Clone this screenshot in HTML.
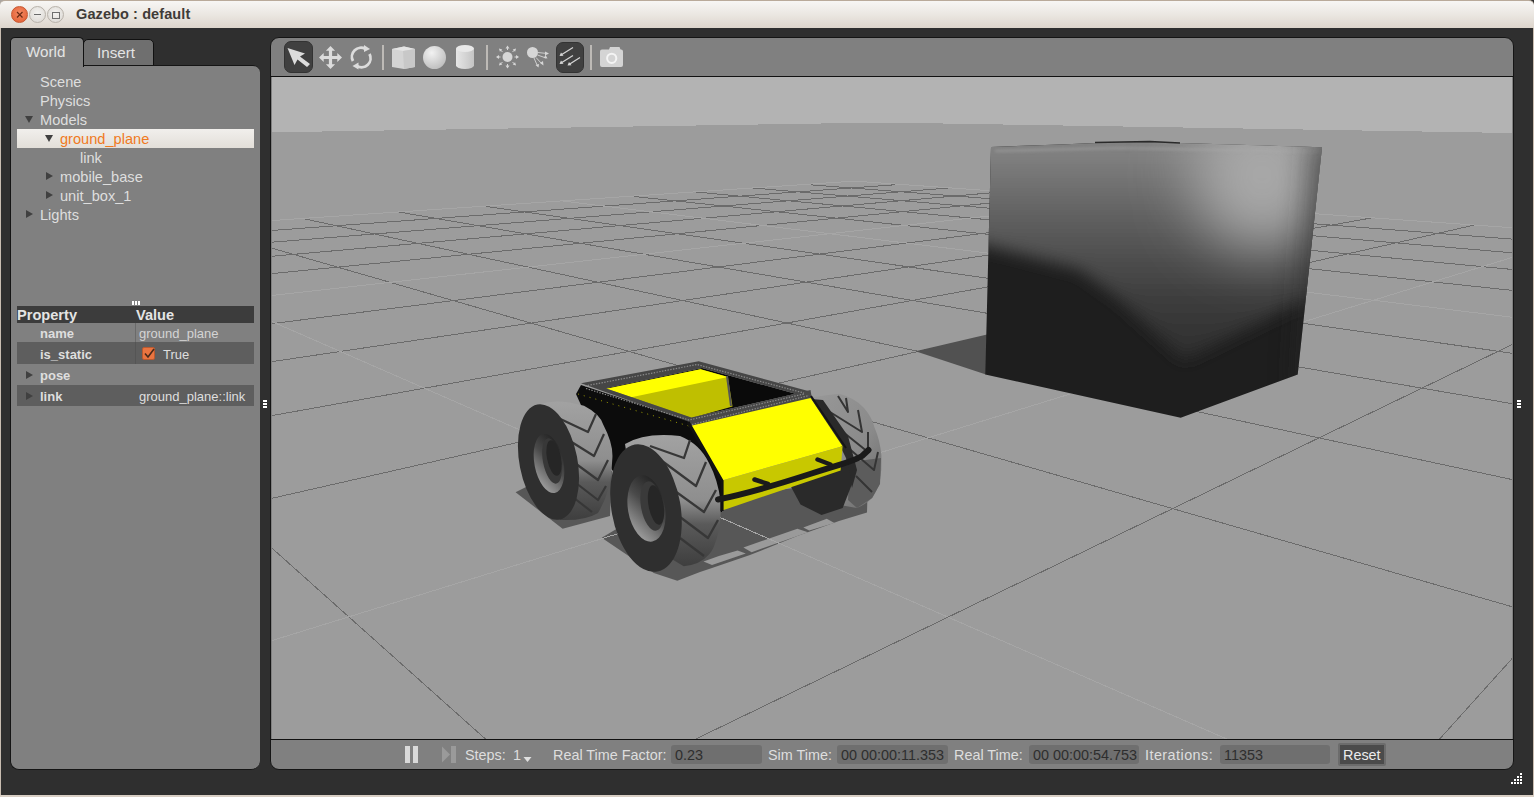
<!DOCTYPE html>
<html><head><meta charset="utf-8">
<style>
*{margin:0;padding:0;box-sizing:border-box}
html,body{width:1534px;height:797px;overflow:hidden;background:#2f2f2f;font-family:"Liberation Sans",sans-serif}
.a{position:absolute}
#title{left:0;top:0;width:1534px;height:28px;background:linear-gradient(#f7f6f4,#ebe7e2 50%,#ddd5cc);border-top:1px solid #b9aa9a;border-radius:5px 5px 0 0}
#title .t{left:76px;top:5px;font-size:14.5px;font-weight:bold;color:#3f3b37;letter-spacing:0.1px}
.wb{width:17px;height:17px;border-radius:50%;top:5px}
#lbord{left:0;top:28px;width:1px;height:769px;background:#c9bdb1}
#rbord{left:1533px;top:28px;width:1px;height:769px;background:#c9bdb1}
#bbord{left:0;top:795px;width:1534px;height:2px;background:#d8cec4}
.tab{border:1px solid #111;border-bottom:none;border-radius:5px 5px 0 0;color:#e6e6e6;font-size:14px}
#lpanel{left:10px;top:65px;width:250px;height:705px;background:#808080;border:1px solid #151515;border-right:none;border-radius:0 7px 9px 9px}
.tr{left:0;font-size:14.6px;color:#dedede;white-space:nowrap;margin-top:0.5px}
.tri{width:0;height:0;border-left:4px solid transparent;border-right:4px solid transparent;border-top:7px solid #404040}
.trr{width:0;height:0;border-top:4px solid transparent;border-bottom:4px solid transparent;border-left:7px solid #404040}
.pt{font-size:13px;white-space:nowrap}
#vpanel{left:270px;top:37px;width:1244px;height:733px;background:#808080;border:1px solid #151515;border-radius:9px}
.sep{width:2px;height:25px;background:#bdbab6;top:45px}
.bt{font-size:14.4px;color:#dedede;white-space:nowrap;top:747px}
.fld{top:745px;height:19px;background:#6f6f6f;border-radius:3px;font-size:14.4px;color:#2e2e2e;padding-left:4px;line-height:21px;white-space:nowrap}
</style></head><body>
<div class="a" style="left:0;top:0;width:6px;height:6px;background:#aaa5a0"></div>
<div id="title" class="a">
  <div class="a wb" style="left:11px;background:radial-gradient(circle at 50% 40%,#f48a64,#e05a2e);border:1px solid #c75730"></div>
  <svg class="a" style="left:16px;top:10px" width="8" height="8"><path d="M1 1L6.5 6.5M6.5 1L1 6.5" stroke="#6a2a14" stroke-width="1.2"/></svg>
  <div class="a wb" style="left:29px;background:radial-gradient(circle at 50% 40%,#f4f3f1,#d9d5d0);border:1px solid #b8b2aa"></div>
  <div class="a" style="left:34px;top:12.8px;width:7px;height:1.5px;background:#6a6a6a"></div>
  <div class="a wb" style="left:47px;background:radial-gradient(circle at 50% 40%,#f4f3f1,#d9d5d0);border:1px solid #b8b2aa"></div>
  <div class="a" style="left:52px;top:10.5px;width:7.5px;height:7px;border:1.3px solid #6e6e6e"></div>
  <div class="a t">Gazebo : default</div>
</div>
<div id="lbord" class="a"></div><div id="rbord" class="a"></div><div id="bbord" class="a"></div>

<!-- left panel -->
<div class="a tab" style="left:83px;top:39px;width:71px;height:27px;background:#6f6f6f;border-bottom:1px solid #111"></div>
<div id="lpanel" class="a"></div>
<div class="a tab" style="left:10px;top:37px;width:74px;height:30px;background:#808080"></div>
<div class="a" style="left:26px;top:42.5px;font-size:15.2px;color:#e4e4e4">World</div>
<div class="a" style="left:97px;top:43.5px;font-size:15.2px;color:#e4e4e4">Insert</div>

<div class="a tr" style="left:40px;top:73px">Scene</div>
<div class="a tr" style="left:40px;top:92px">Physics</div>
<div class="a tri" style="left:25px;top:116px"></div>
<div class="a tr" style="left:40px;top:111px">Models</div>
<div class="a" style="left:17px;top:129px;width:237px;height:19px;background:linear-gradient(#f1efec,#e3dfd9)"></div>
<div class="a tri" style="left:45px;top:135px"></div>
<div class="a tr" style="left:60px;top:130px;color:#f07a1e">ground_plane</div>
<div class="a tr" style="left:80px;top:149px">link</div>
<div class="a trr" style="left:46px;top:172px"></div>
<div class="a tr" style="left:60px;top:168px">mobile_base</div>
<div class="a trr" style="left:46px;top:191px"></div>
<div class="a tr" style="left:60px;top:187px">unit_box_1</div>
<div class="a trr" style="left:26px;top:210px"></div>
<div class="a tr" style="left:40px;top:206px">Lights</div>

<!-- splitter handle -->
<div class="a" style="left:132px;top:301px;width:2px;height:4px;background:#fff"></div>
<div class="a" style="left:135px;top:301px;width:2px;height:4px;background:#fff"></div>
<div class="a" style="left:138px;top:301px;width:2px;height:4px;background:#fff"></div>

<!-- property table -->
<div class="a" style="left:17px;top:306px;width:237px;height:17px;background:#3c3c3c"></div>
<div class="a pt" style="left:17px;top:307px;font-weight:bold;color:#e4e4e4;font-size:14.6px">Property</div>
<div class="a pt" style="left:136px;top:307px;font-weight:bold;color:#e4e4e4;font-size:14.6px">Value</div>
<div class="a" style="left:135px;top:323px;width:1px;height:41px;background:#6a6a6a"></div>
<div class="a pt" style="left:40px;top:326px;font-weight:bold;color:#dedede">name</div>
<div class="a pt" style="left:139px;top:326px;color:#d4d4d4">ground_plane</div>
<div class="a" style="left:17px;top:342px;width:237px;height:22px;background:#5e5e5e"></div>
<div class="a" style="left:135px;top:342px;width:1px;height:22px;background:#555"></div>
<div class="a pt" style="left:40px;top:347px;font-weight:bold;color:#dedede">is_static</div>
<div class="a" style="left:142px;top:347px;width:13px;height:13px;background:#ea7440;border-radius:2px;border:1px solid #b95a30"></div>
<svg class="a" style="left:142px;top:347px" width="14" height="14"><path d="M3 6.5L6 10L12 2" stroke="#4a2a1a" stroke-width="1.6" fill="none"/></svg>
<div class="a pt" style="left:163px;top:347px;color:#dedede">True</div>
<div class="a trr" style="left:26px;top:371px"></div>
<div class="a pt" style="left:40px;top:368px;font-weight:bold;color:#dedede">pose</div>
<div class="a" style="left:17px;top:385px;width:237px;height:21px;background:#5e5e5e"></div>
<div class="a trr" style="left:26px;top:392px"></div>
<div class="a pt" style="left:40px;top:389px;font-weight:bold;color:#dedede">link</div>
<div class="a pt" style="left:139px;top:389px;color:#dedede">ground_plane::link</div>
<!-- right splitter handles -->
<div class="a" style="left:263px;top:400px;width:4px;height:2px;background:#fff"></div>
<div class="a" style="left:263px;top:403px;width:4px;height:2px;background:#fff"></div>
<div class="a" style="left:263px;top:406px;width:4px;height:2px;background:#fff"></div>
<div class="a" style="left:1517px;top:400px;width:4px;height:2px;background:#fff"></div>
<div class="a" style="left:1517px;top:403px;width:4px;height:2px;background:#fff"></div>
<div class="a" style="left:1517px;top:406px;width:4px;height:2px;background:#fff"></div>

<!-- viewport panel -->
<div id="vpanel" class="a"></div>
<svg class="a" style="left:0;top:0" width="1534" height="797" viewBox="0 0 1534 797">
<defs><clipPath id="vc"><rect x="272" y="77" width="1240" height="662"/></clipPath></defs>
<rect x="271" y="76" width="1242" height="1" fill="#111"/>
<rect x="271" y="739" width="1242" height="1" fill="#111"/>
<g clip-path="url(#vc)">
<rect x="272" y="77" width="1240" height="662" fill="#9c9c9c"/>
<path d="M272 77H1512V133L883 122.5L272 132.3Z" fill="#b3b3b3" shape-rendering="crispEdges"/>
<path d="M149981.9 20225.1L4477.6 437.9M126235.3 20246.5L3771.1 387.8M102488.7 20267.9L3249.1 350.8M78742.1 20289.4L2847.8 322.4M31248.9 20332.2L2271.2 281.5M7502.3 20353.6L2057.1 266.4M-16244.2 20375.0L1876.8 253.6M-39990.8 20396.5L1723.0 242.7M-87484.0 20439.3L1474.2 225.1M-111230.6 20460.7L1372.2 217.8M-134977.2 20482.1L1281.8 211.4M-158723.8 20503.6L1201.1 205.7M-23226.7 2580.7L1063.1 195.9M-10283.0 1187.4L1003.7 191.7M-6660.9 797.6L949.5 187.9M-4956.8 614.1L899.8 184.4M-166398.5 20510.5L-2936.4 437.8M-142797.3 20489.2L-2209.3 388.6M-119196.1 20467.9L-1668.5 351.9M-95595.0 20446.6L-1250.5 323.6M-48392.6 20404.0L-646.5 282.7M-24791.5 20382.8L-421.3 267.5M-1190.3 20361.5L-231.2 254.6M22410.8 20340.2L-68.7 243.6M69613.2 20297.6L194.6 225.8M93214.3 20276.3L302.8 218.5M116815.5 20255.0L398.8 212.0M140416.7 20233.7L484.7 206.2M25829.2 2890.6L631.5 196.2M11680.8 1234.4L694.9 191.9M8077.8 812.7L752.7 188.0M6431.1 619.9L805.6 184.4" stroke="#6b6b6b" stroke-width="1" fill="none" shape-rendering="crispEdges"/><!-- box shadow --><path d="M915.5 351.2L987 334.5L986 374.5Z" fill="#515151"/>
<!-- robot shadows -->
<path d="M515.6 492.2L562.6 528.7L610 516L612 470L560 470Z" fill="#575757"/>
<path d="M601.7 537.8L653.8 573L677.3 580.8L700 572L712 568L750 555L797.3 536L839 521L867 512.5L868 478L720 498L640 515Z" fill="#575757"/>
<path d="M703.5 561.6Q720 555 737.6 550.4L745.8 553.4L712 565Z M743.4 547.5L797.4 528.7L808 532.3L751.6 552.2Z M803.3 527.6L826.8 518.8L834.4 522.9L809.2 530.5Z" fill="#9a9a9a"/>
<path d="M173728.4 20203.7L5487.7 509.5M54995.5 20310.8L2529.6 299.9M-63737.4 20417.9L1590.1 233.3M-182470.3 20525.0L1128.6 200.6M-3966.1 507.5L854.3 181.1M-189999.6 20531.8L-3966.1 507.5M-71993.8 20425.3L-917.7 301.1M46012.0 20318.9L71.9 234.1M164017.8 20212.4L561.8 200.9M5487.7 509.5L854.3 181.1" stroke="#a6a6a6" stroke-width="1" fill="none" shape-rendering="crispEdges"/>
<defs>
<clipPath id="boxc"><path d="M991 147L1060 144.5L1120 142L1180 143L1322 147.2L1297.7 374.4L1180.7 417.8L985.3 374.4Z"/></clipPath>
<filter id="bl8" x="-30%" y="-30%" width="160%" height="160%"><feGaussianBlur stdDeviation="8"/></filter>
<filter id="bl14" x="-50%" y="-50%" width="200%" height="200%"><feGaussianBlur stdDeviation="14"/></filter>
<filter id="bl30" x="-50%" y="-50%" width="200%" height="200%"><feGaussianBlur stdDeviation="30"/></filter>
<linearGradient id="boxtop" gradientUnits="userSpaceOnUse" x1="0" y1="150" x2="0" y2="365"><stop offset="0" stop-color="#828282"/><stop offset="0.35" stop-color="#5c5c5c"/><stop offset="0.7" stop-color="#3c3c3c"/><stop offset="1" stop-color="#2c2c2c"/></linearGradient><filter id="bl2" filterUnits="userSpaceOnUse" x="900" y="100" width="500" height="100"><feGaussianBlur stdDeviation="1.5"/></filter>
</defs>
<!-- box shadow -->

<!-- box -->
<g clip-path="url(#boxc)">
<rect x="980" y="135" width="350" height="290" fill="#1e1e1e"/>
<path d="M960 120H1340V300L1298 303L1184 360L1120 300L1080 270L989 246L960 240Z" fill="url(#boxtop)" filter="url(#bl8)"/>
<ellipse cx="1262" cy="175" rx="70" ry="75" fill="#a8a8a8" filter="url(#bl30)"/>
<path d="M995 151L1120 148L1320 152" stroke="#aaaaaa" stroke-width="2.2" fill="none" filter="url(#bl2)" opacity="0.55"/><path d="M1312 140H1360V390H1296Z" fill="#2a2a2a" filter="url(#bl14)" opacity="0.6"/>
</g>
<path d="M1095 142.5L1150 141.5L1180 143" stroke="#2a2a2a" stroke-width="1.5" fill="none"/>
<defs>
<linearGradient id="trd" gradientUnits="objectBoundingBox" x1="0" y1="0" x2="0" y2="1"><stop offset="0" stop-color="#a2a2a2"/><stop offset="0.5" stop-color="#8e8e8e"/><stop offset="0.68" stop-color="#5a5a5a"/><stop offset="1" stop-color="#3e3e3e"/></linearGradient>
<linearGradient id="hubg" x1="0.8" y1="0.1" x2="0.2" y2="0.9"><stop offset="0" stop-color="#262626"/><stop offset="0.45" stop-color="#4a4a4a"/><stop offset="1" stop-color="#9a9a9a"/></linearGradient><linearGradient id="trd2" gradientUnits="objectBoundingBox" x1="0" y1="0" x2="1" y2="1"><stop offset="0" stop-color="#9a9a9a"/><stop offset="0.6" stop-color="#8a8a8a"/><stop offset="1" stop-color="#6a6a6a"/></linearGradient>
</defs>
<!-- rear right wheel (far) -->
<path d="M808 398Q825 395 839.2 393.8Q855 398 863.8 407.8Q872 417 874.4 427.2Q880 440 881.4 455.3Q882 470 879.6 483.4Q876 492 872.6 497.5Q865 505 856.8 508L812 500L800 440Z" fill="url(#trd2)"/>
<path d="M850 462L881 458L880 484L872 498L857 508L848 500Z" fill="#5c5c5c"/>
<g stroke="#343434" stroke-width="2" fill="none" stroke-linejoin="round">
<path d="M838 396L848 412L846 398M830 412L862 432L858 410M838 428L868 452L868 432M846 446L874 470L878 452M856 476L872 492"/>
</g>
<path d="M811 399L823 400L848 436L857 470L852 488L846 458L838 442Z" fill="#2a2a2a"/>
<!-- front right wheel (dark, under bumper) -->
<path d="M790 485L848 464L852 484L842.7 508L821.6 515L800.5 504.5Z" fill="#2a2a2a"/>
<!-- chassis black side -->
<path d="M576 394L581 385L690 421L722 480L722 512L660 515L612 470L590 425Z" fill="#0c0c0c"/>
<!-- rear left wheel -->
<path d="M540 404Q557 398 584 405.8Q600 414 603.4 425.1Q614 445 612.2 460.3Q612 490 598 513Q585 521 560 520L530 470Z" fill="url(#trd)"/>
<g stroke="#373737" stroke-width="2.2" fill="none" stroke-linejoin="round">
<path d="M554 416L588 432L596 414M562 436L594 456L604 434M568 458L598 480L608 460M572 480L598 500L606 486M574 498L592 512"/>
</g>
<ellipse cx="548.5" cy="462" rx="29" ry="58.5" transform="rotate(-11 548.5 462)" fill="#2f2f2f"/>
<ellipse cx="549" cy="463.5" rx="14.5" ry="30" transform="rotate(-11 549 463.5)" fill="url(#hubg)"/><ellipse cx="552" cy="461" rx="9" ry="23" transform="rotate(-11 552 461)" fill="#383838"/>
<ellipse cx="554" cy="458" rx="7" ry="18" transform="rotate(-11 554 458)" fill="#262626"/>
<!-- frame opening -->
<path d="M605.6 388.3L702 368L795.4 393.8L691.4 417.5Z" fill="#0a0a0a"/>
<path d="M606.5 388.7L700.5 369.2L727.9 377L732.5 406.6L691.4 417.9Z" fill="#bfbf00"/>
<path d="M606.5 388.7L700.5 369.2L727.9 377L631.4 397.3Z" fill="#ffff00"/>
<path d="M727 376L731 406" stroke="#555" stroke-width="2"/>
<!-- frame rail -->
<path d="M581 383.2L698.7 361.3L810 391.6L689.6 422.1ZM605.6 388.3L691.4 417.5L795.4 393.8L702 368Z" fill="#464646" fill-rule="evenodd"/>
<path d="M688 420L810.5 390L812 399L690 428Z" fill="#484848"/><path d="M585 386L697 364.5L804 393M586 388.5L689 420L804 394" stroke="#8a8a8a" stroke-width="1.2" stroke-dasharray="1.4 1.4" fill="none"/><path d="M692 424.5L809 395.5" stroke="#8a8a8a" stroke-width="1.2" stroke-dasharray="1.4 1.4" fill="none"/>
<path d="M578 394L689 426" stroke="#b8b800" stroke-width="0.8" stroke-dasharray="1 5" fill="none"/>
<!-- front left wheel -->
<path d="M625 444Q645 432 680 436Q700 444 709 463.1Q718 480 720.7 502Q721 520 718.7 531.2Q714 550 709 554.6Q700 565 683.7 566.2L640 540Z" fill="url(#trd)"/>
<g stroke="#373737" stroke-width="2.3" fill="none" stroke-linejoin="round">
<path d="M650 446L684 458L690 440M658 458L696 486L706 462M668 486L704 512L716 490M676 514L708 538L718 520M680 538L704 556"/>
</g>
<ellipse cx="646" cy="508" rx="34.5" ry="64.5" transform="rotate(-10 646 508)" fill="#2f2f2f"/>
<ellipse cx="646.5" cy="508.5" rx="18.5" ry="33.5" transform="rotate(-10 646.5 508.5)" fill="url(#hubg)"/>
<ellipse cx="652" cy="506" rx="11" ry="25" transform="rotate(-10 652 506)" fill="#3a3a3a"/><ellipse cx="656" cy="505" rx="7.5" ry="20" transform="rotate(-10 656 505)" fill="#262626"/>
<!-- front panel -->
<path d="M690 426L810.5 398L842.6 446.3L722 480.4Z" fill="#ffff00"/>
<path d="M722 480.4L842.6 446.3L840.6 470.4L722 510.6Z" fill="#c8c800"/>
<path d="M688 422L722 481L722 511" stroke="#111" stroke-width="3.2" fill="none"/>
<path d="M811 396L846 448" stroke="#151515" stroke-width="2" fill="none"/>
<!-- bumper -->
<path d="M718 499.5C740 495 770 487 810 474S852 462 862 456L868.5 450" stroke="#1a1a1a" stroke-width="6" fill="none" stroke-linecap="round"/>
<path d="M754.5 479.5L768 484M817.5 459.5L830.5 464.5" stroke="#1a1a1a" stroke-width="4.5" stroke-linecap="round"/>

</g>
</svg>

<!-- toolbar icons -->
<div class="a" style="left:284px;top:41px;width:29px;height:32px;background:#404040;border-radius:7px;border:1px solid #333"></div>
<div class="a" style="left:556px;top:42px;width:28px;height:31px;background:#404040;border-radius:7px;border:1px solid #333"></div>
<div class="a sep" style="left:382px"></div>
<div class="a sep" style="left:486px"></div>
<div class="a sep" style="left:590px"></div>
<svg class="a" style="left:270px;top:36px" width="370" height="44" viewBox="270 36 370 44">
  <defs>
    <radialGradient id="sph" cx="0.38" cy="0.3" r="0.75"><stop offset="0" stop-color="#f2f2f2"/><stop offset="1" stop-color="#bdbdbd"/></radialGradient>
    <linearGradient id="cyl" x1="0" x2="1"><stop offset="0" stop-color="#e6e6e6"/><stop offset="1" stop-color="#c4c4c4"/></linearGradient>
  </defs>
  <!-- select arrow -->
  <path d="M287.5 48L305 53.5L300 56.5L310 64L307 67L297.5 59.5L294.5 65Z" fill="#dcdcdc"/>
  <!-- translate -->
  <path d="M330.5 46.0L335.1 50.7L332.1 50.7L332.1 55.9L337.3 55.9L337.3 52.9L342.0 57.5L337.3 62.1L337.3 59.1L332.1 59.1L332.1 64.3L335.1 64.3L330.5 69.0L325.9 64.3L328.9 64.3L328.9 59.1L323.7 59.1L323.7 62.1L319.0 57.5L323.7 52.9L323.7 55.9L328.9 55.9L328.9 50.7L325.9 50.7Z" fill="#dcdcdc"/>
  <!-- rotate -->
  <path d="M353 61A9 9 0 0 1 365.5 49" stroke="#dcdcdc" stroke-width="2.8" fill="none"/>
  <path d="M369.5 54A9 9 0 0 1 357 66" stroke="#dcdcdc" stroke-width="2.8" fill="none"/>
  <path d="M364 45L370 49L364 52Z" fill="#dcdcdc"/>
  <path d="M358.5 62.5L352.5 66L358.5 69.5Z" fill="#dcdcdc"/>
  <!-- box -->
  <path d="M392 49L404 46.5L415 49V67L404 69L392 67Z" fill="#d4d4d4"/>
  <path d="M392 49L404 46.5L415 49L403 51Z" fill="#e4e4e4"/>
  <path d="M403 51L415 49V67L404 69Z" fill="#c8c8c8"/>
  <!-- sphere -->
  <circle cx="434.5" cy="57.5" r="11.5" fill="url(#sph)"/>
  <!-- cylinder -->
  <path d="M456 48.5V65.5A9 3.5 0 0 0 474 65.5V48.5Z" fill="url(#cyl)"/>
  <ellipse cx="465" cy="48.5" rx="9" ry="3.5" fill="#e8e8e8"/>
  <!-- point light -->
  <circle cx="507.5" cy="57" r="5" fill="#d6d6d6"/>
  <g stroke="#d6d6d6" stroke-width="1">
   <path d="M507.5 50V47M507.5 64V67M500.5 57H497M514.5 57H518M502.5 52L500 49.5M512.5 52L515 49.5M502.5 62L500 64.5M512.5 62L515 64.5"/>
  </g>
  <g fill="#d6d6d6"><path d="M507.5 45.5L505.5 48.5H509.5Z M507.5 68.5L505.5 65.5H509.5Z M496 57L499 55V59Z M519 57L516 55V59Z M499 48.5L502.3 49.4L499.9 51.8Z M516 48.5L515.1 51.8L512.7 49.4Z M499 65.5L499.9 62.2L502.3 64.6Z M516 65.5L512.7 64.6L515.1 62.2Z"/></g>
  <!-- spot light -->
  <circle cx="532.5" cy="52.5" r="5.5" fill="#d6d6d6"/>
  <g stroke="#d6d6d6" stroke-width="0.9"><path d="M538 52.5L547 53.5M537.5 55L546 58M536 57.5L542 64M534 58L537.5 66"/></g>
  <g fill="#d6d6d6"><path d="M549 53.5L545 51.5V55.5Z M547.5 58.5L543.6 58L545.6 55Z M543.5 65.5L540 63L543 61Z M538.5 67.5L535.5 65L539 64Z"/></g>
  <!-- directional light (on dark button) -->
  <g stroke="#d4d4d4" stroke-width="1.3"><path d="M573 47.5L561 55M573 55.5L561 63M580 57.5L569 64.5"/></g>
  <g fill="#d4d4d4"><path d="M559.5 56L561 52.5L563.5 55.8Z M559.5 64L561 60.5L563.5 63.8Z M567.5 65.5L569 62L571.5 65.3Z"/></g>
  <!-- camera -->
  <path d="M603 49.5H609L610 47H619.5L620.5 49.5H621Q623 49.5 623 51.5V65Q623 67 621 67H602Q600 67 600 65V51.5Q600 49.5 602 49.5Z" fill="#d4d4d4"/>
  <circle cx="611.7" cy="58.3" r="4.6" fill="none" stroke="#f4f4f4" stroke-width="2"/>
</svg>

<!-- bottom toolbar -->
<div class="a" style="left:405px;top:746px;width:5px;height:17px;background:#d9d9d9"></div>
<div class="a" style="left:413px;top:746px;width:5px;height:17px;background:#d9d9d9"></div>
<svg class="a" style="left:440px;top:745px" width="20" height="20"><path d="M2 1.5L10 9.5L2 17.5Z" fill="#9a9a9a"/><rect x="11" y="1" width="5" height="17" fill="#9a9a9a"/></svg>
<div class="a bt" style="left:465px">Steps:</div>
<div class="a bt" style="left:513px">1</div>
<svg class="a" style="left:522px;top:756px" width="12" height="8"><path d="M1.5 1H9.5L5.5 6Z" fill="#e0e0e0"/></svg>
<div class="a bt" style="left:553px">Real Time Factor:</div>
<div class="a fld" style="left:671px;width:91px">0.23</div>
<div class="a bt" style="left:768px">Sim Time:</div>
<div class="a fld" style="left:837px;width:111px">00 00:00:11.353</div>
<div class="a bt" style="left:954px">Real Time:</div>
<div class="a fld" style="left:1029px;width:110px">00 00:00:54.753</div>
<div class="a bt" style="left:1145px;letter-spacing:0.45px">Iterations:</div>
<div class="a fld" style="left:1220px;width:110px">11353</div>
<div class="a" style="left:1338px;top:743px;width:48px;height:23px;background:#6c6c6c;border-radius:2px"></div>
<div class="a" style="left:1340px;top:745px;width:44px;height:19px;background:#4b4b4b"></div>
<div class="a bt" style="left:1343px;color:#ececec">Reset</div>

<!-- resize grip -->
<svg class="a" style="left:1510px;top:772px" width="14" height="14"><g fill="#fff"><rect x="10" y="1" width="2" height="2"/><rect x="7" y="4" width="2" height="2"/><rect x="10" y="4" width="2" height="2"/><rect x="4" y="7" width="2" height="2"/><rect x="7" y="7" width="2" height="2"/><rect x="10" y="7" width="2" height="2"/><rect x="1" y="10" width="2" height="2"/><rect x="4" y="10" width="2" height="2"/><rect x="7" y="10" width="2" height="2"/><rect x="10" y="10" width="2" height="2"/></g></svg>
</body></html>
